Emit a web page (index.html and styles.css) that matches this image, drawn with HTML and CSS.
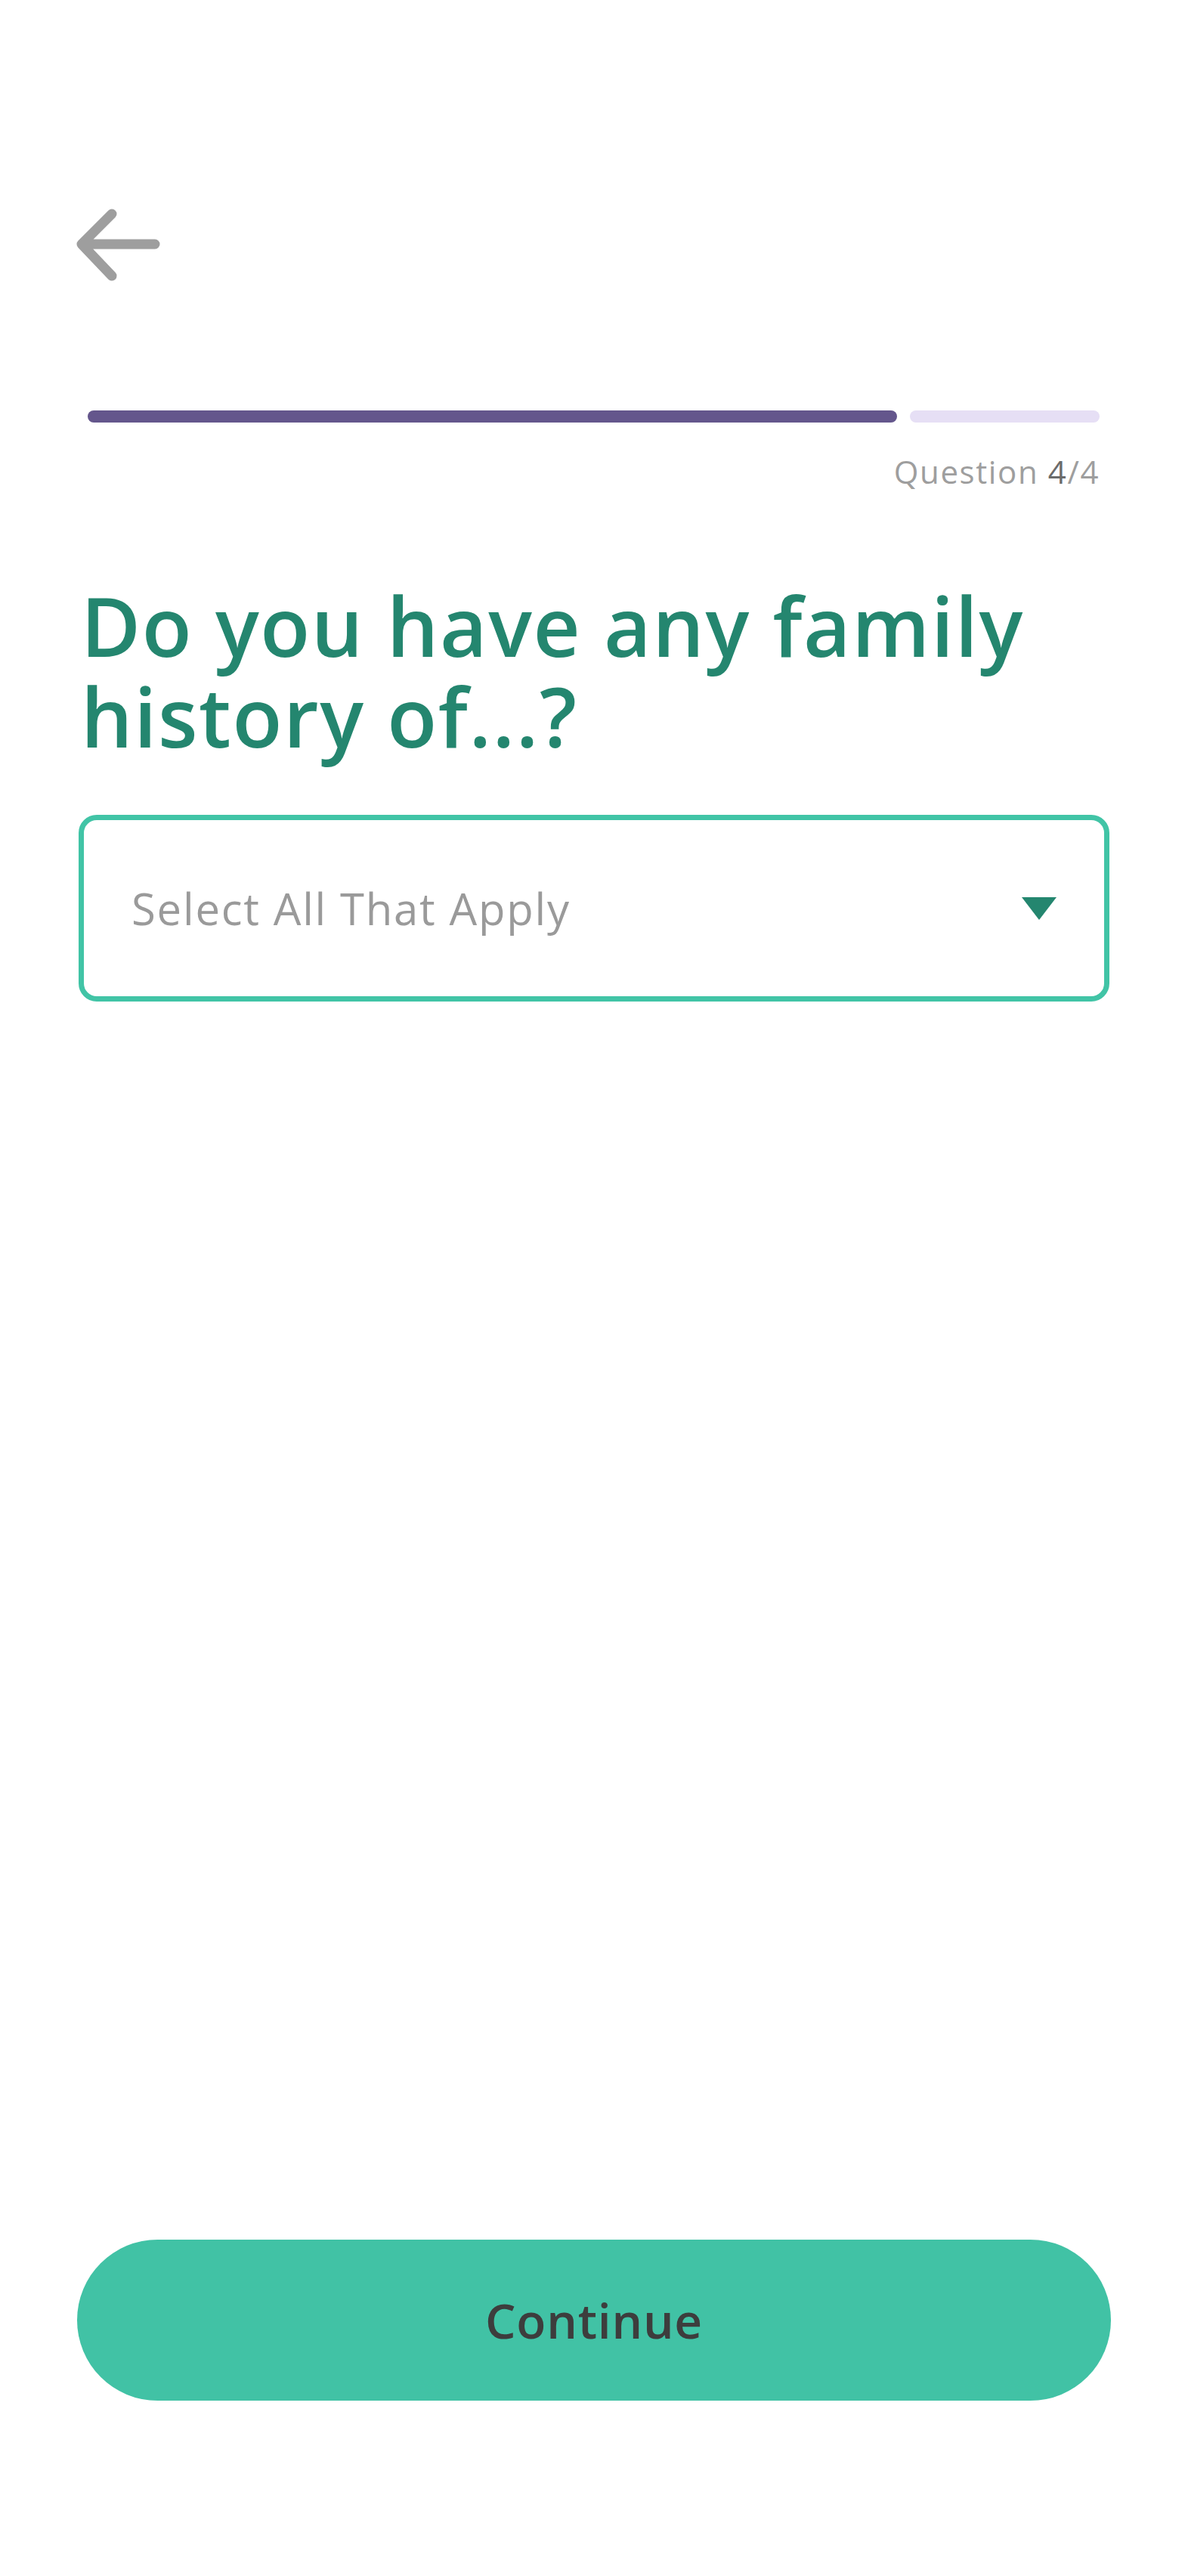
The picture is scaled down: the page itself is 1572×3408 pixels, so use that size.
FILE: index.html
```html
<!DOCTYPE html>
<html lang="en">
<head>
    <meta charset="UTF-8">
    <meta name="viewport" content="width=device-width, initial-scale=1.0">
    <title>Family history</title>
    <link rel="stylesheet" href="styles.css">
</head>
<body>
    <div class="screen">
        <button class="back" aria-label="Back">
            <svg width="126" height="108" viewBox="0 0 126 108">
                <path d="M56 13 L16 53 L56 95 M16 53 H113" fill="none" stroke="#9e9e9e" stroke-width="13" stroke-linecap="round" stroke-linejoin="round"/>
            </svg>
        </button>

        <div class="progress">
            <div class="bar done"></div>
            <div class="bar todo"></div>
        </div>
        <div class="counter">Question <b>4</b>/4</div>

        <h1 class="title">Do you have any family history of...?</h1>

        <div class="select">
            <span class="placeholder">Select All That Apply</span>
            <span class="caret"></span>
        </div>

        <button class="continue">Continue</button>
    </div>
</body>
</html>
```

FILE: styles.css
```css
*{
    padding: 0;
    margin: 0;
    box-sizing: border-box;
}
body{
    background-color: #fff;
    font-family: "Open Sans", "Lato", sans-serif;
}
.screen{
    min-height: 3408px;
    display: flex;
    flex-direction: column;
    padding: 270px 104px 232px;
}
.back{
    width: 126px;
    height: 108px;
    margin-left: -12px;
    border: none;
    background: none;
    display: flex;
}
.progress{
    display: flex;
    gap: 17px;
    margin: 165px 13px 0 12px;
    & .bar{
        height: 16px;
        border-radius: 8px;
    }
    & .done{
        flex: 1071;
        background-color: #64568c;
    }
    & .todo{
        flex: 251;
        background-color: #e6dff5;
    }
}
.counter{
    align-self: flex-end;
    margin: 36px 13px 0 0;
    font-size: 42px;
    letter-spacing: 1.6px;
    color: #9e9e9e;
    & b{
        font-weight: 400;
        color: #6b6b6b;
    }
}
.title{
    margin: 116px 0 0 3px;
    font-size: 108px;
    line-height: 120px;
    font-weight: 600;
    letter-spacing: 1.6px;
    color: #24866f;
}
.select{
    margin-top: 70px;
    height: 247px;
    border: 7px solid #41c4a6;
    border-radius: 24px;
    display: flex;
    align-items: center;
    justify-content: space-between;
    padding: 0 63px 0 63px;
    & .placeholder{
        font-size: 58px;
        letter-spacing: 1.8px;
        color: #9a9a9a;
    }
    & .caret{
        width: 0;
        height: 0;
        border-left: 23px solid transparent;
        border-right: 23px solid transparent;
        border-top: 30px solid #24866f;
    }
}
.continue{
    margin-top: auto;
    margin-left: -2px;
    margin-right: -2px;
    height: 213px;
    border: none;
    border-radius: 107px;
    background-color: #41c2a5;
    font-family: inherit;
    font-size: 64px;
    font-weight: 600;
    letter-spacing: 0.8px;
    color: #3d3d3d;
}
```
